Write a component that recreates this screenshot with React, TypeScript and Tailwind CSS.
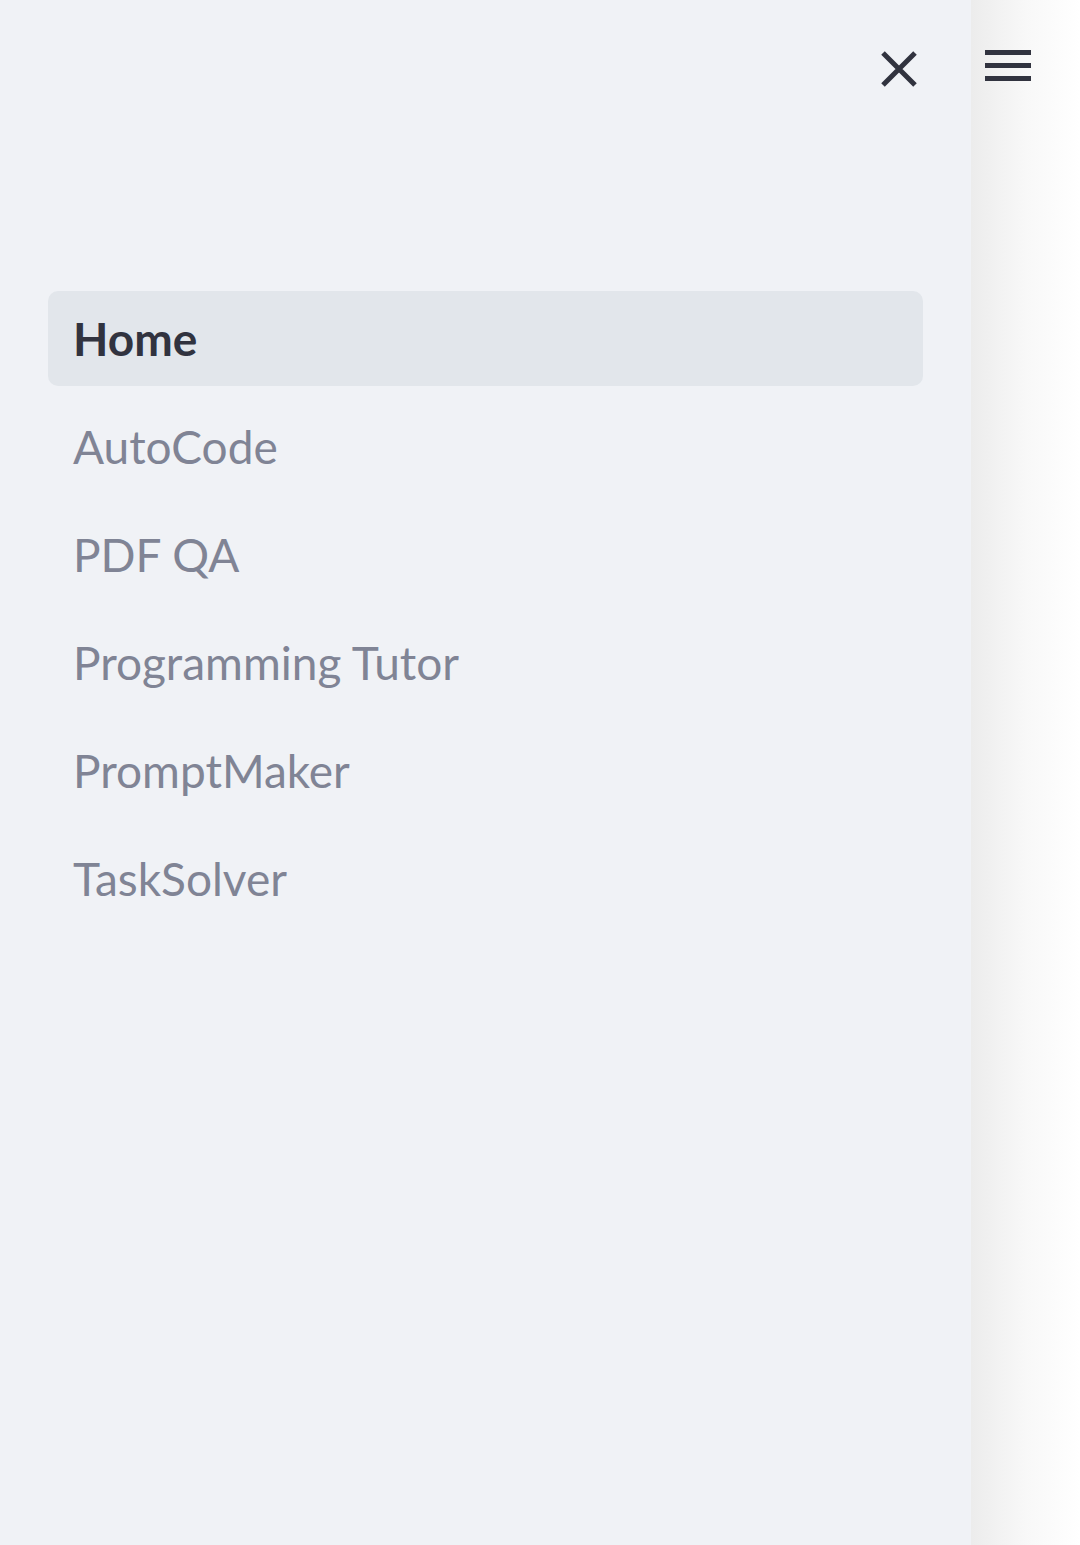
const pages = ["Home", "AutoCode", "PDF QA", "Programming Tutor", "PromptMaker", "TaskSolver"];

function CloseIcon() {
    return (
        <svg width="40" height="40" viewBox="0 0 40 40" fill="none" stroke="#31333f" strokeWidth="5" strokeLinecap="butt">
            <path d="M4 4 L36 36 M36 4 L4 36" />
        </svg>
    );
}

function MenuIcon() {
    return (
        <svg width="46" height="32" viewBox="0 0 46 32" fill="#31333f">
            <rect x="0" y="0" width="46" height="5" />
            <rect x="0" y="13" width="46" height="5" />
            <rect x="0" y="26" width="46" height="5" />
        </svg>
    );
}

export default function App() {
    const active = "Home";

    return (
        <div className="flex h-[1545px] w-[1080px] overflow-hidden bg-white" style={{ fontFamily: '"Lato", "Noto Sans", sans-serif' }}>
            {/* Sidebar */}
            <aside className="flex w-[971px] shrink-0 flex-col bg-[#f0f2f6]">
                <div className="flex justify-end pr-[52px] pt-[49px]">
                    <button className="flex items-center justify-center">
                        <CloseIcon />
                    </button>
                </div>

                <nav className="mt-[202px] flex flex-col gap-[13px] px-[48px]">
                    {pages.map((p) => (
                        <a
                            key={p}
                            href="#"
                            className={`flex h-[95px] items-center rounded-[10px] pl-[25px] text-[46px] ${
                                p === active ? "bg-[#e2e6eb] font-bold text-[#31333f]" : "text-[#808495]"
                            }`}
                        >
                            {p}
                        </a>
                    ))}
                </nav>
            </aside>

            {/* Main content edge */}
            <div className="relative flex-1 bg-gradient-to-r from-[#ececec] via-[#f8f8f8] to-white">
                <button className="absolute left-[14px] top-[50px]">
                    <MenuIcon />
                </button>
            </div>
        </div>
    );
}
